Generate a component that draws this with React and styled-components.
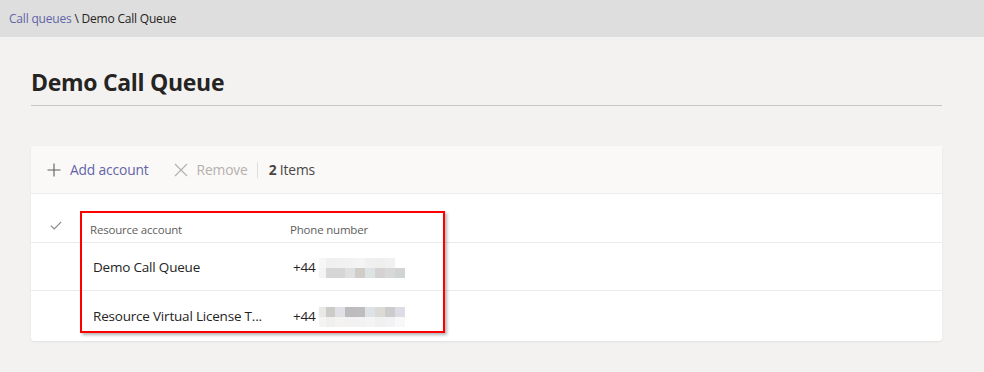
import React from "react";
import styled, { createGlobalStyle } from "styled-components";

const Global = createGlobalStyle`
  html, body { margin: 0; padding: 0; background: #f3f2f1; }
  body { font-family: "Open Sans", "Noto Sans", sans-serif; color: #252423; }
`;

const Page = styled.div`
  width: 984px;
  height: 372px;
  background: #f3f2f1;
  overflow: hidden;
`;

const TopBar = styled.div`
  height: 37px;
  background: #dedede;
  display: flex;
  align-items: center;
  padding-left: 9px;
  font-size: 12px;
  letter-spacing: -0.2px;
`;

const Crumb = styled.span`
  color: ${(p) => (p.$link ? "#6264a7" : "#252423")};
`;

const Main = styled.div`
  padding: 0 42px 0 31px;
`;

const Title = styled.h1`
  margin: 0;
  padding: 30px 0 8px;
  font-size: 23px;
  line-height: 30px;
  font-weight: 700;
  letter-spacing: -0.3px;
  color: #252423;
  border-bottom: 1px solid #c8c6c4;
`;

const Card = styled.div`
  margin-top: 40px;
  background: #fff;
  border-radius: 3px;
  box-shadow: 0 1px 2px rgba(0, 0, 0, 0.08);
  position: relative;
`;

const Toolbar = styled.div`
  height: 47px;
  background: #faf9f8;
  border-radius: 3px 3px 0 0;
  display: flex;
  align-items: center;
  padding-left: 16px;
  font-size: 13.8px;
  letter-spacing: -0.15px;
  border-bottom: 1px solid #edebe9;
`;

const ToolButton = styled.div`
  display: flex;
  align-items: center;
  gap: 9px;
  color: ${(p) => (p.$disabled ? "#b3b0ad" : "#6264a7")};
  margin-right: ${(p) => p.$mr || 0}px;
`;

const Sep = styled.span`
  width: 1px;
  height: 16px;
  background: #e1dfdd;
  margin-right: 11px;
`;

const Count = styled.span`
  color: #484644;
  b { font-weight: 700; }
`;

const Row = styled.div`
  display: grid;
  grid-template-columns: 59px 200px 1fr;
  height: ${(p) => p.$h}px;
  align-items: ${(p) => (p.$header ? "end" : "center")};
  padding-bottom: ${(p) => (p.$header ? 5 : 0)}px;
  box-sizing: border-box;
  border-bottom: ${(p) => (p.$last ? "none" : "1px solid #edebe9")};
  font-size: ${(p) => (p.$header ? "11.5px" : "13.5px")};
  color: ${(p) => (p.$header ? "#605e5c" : "#252423")};
  letter-spacing: -0.2px;
`;

const CheckCell = styled.div`
  display: flex;
  padding-left: 19px;
  padding-bottom: 7px;
`;

const Cell = styled.div`
  padding-left: ${(p) => p.$pl}px;
  display: flex;
  align-items: center;
  white-space: nowrap;
`;

const Mosaic = styled.div`
  display: grid;
  grid-template-columns: 7px 9px 10px 10px 10px 10px 10px 10px 10px;
  grid-template-rows: 10px 10px;
  margin-left: 3px;
  margin-top: 2px;
`;

const Highlight = styled.div`
  position: absolute;
  left: 49px;
  top: 65px;
  width: 365px;
  height: 122px;
  box-sizing: border-box;
  border: 2px solid #ff0000;
  box-shadow: 2px 2px 3px rgba(0, 0, 0, 0.3);
  pointer-events: none;
`;

const m1 = [
  ["#f6f6f6", "#f0f0f0", "#f1f1f1", "#f2f2f2", "#f4f4f4", "#f0f0f0", "#efefee", "#f1f1f2", "#ffffff"],
  ["#f4f4f4", "#d6d6d6", "#d6d6d6", "#e0e0e0", "#d0ccc8", "#dde2e2", "#d4d2d2", "#d8d8d8", "#d0d4d4"],
];
const m2 = [
  ["#e8e8e6", "#cccbc8", "#e0e0e6", "#bcbcbe", "#bebcbc", "#dde2e6", "#dcdad6", "#cccccc", "#dcdce6"],
  ["#f4f4f4", "#f0f0ef", "#f4f3f2", "#f2f2f2", "#f2f2f2", "#f4f4f4", "#f0f0f0", "#f2f2f4", "#f8f8f8"],
];

function Pixels({ data }) {
  return (
    <Mosaic>
      {data.flatMap((r, i) => r.map((c, j) => <span key={i + "-" + j} style={{ background: c }} />))}
    </Mosaic>
  );
}

const PlusIcon = () => (
  <svg width="14" height="14" viewBox="0 0 14 14">
    <path d="M7 0.5v13M0.5 7h13" stroke="#605e5c" strokeWidth="1.1" fill="none" />
  </svg>
);

const XIcon = () => (
  <svg width="14" height="14" viewBox="0 0 14 14">
    <path d="M1 1l12 12M13 1L1 13" stroke="#b3b0ad" strokeWidth="1.1" fill="none" />
  </svg>
);

const Check = () => (
  <svg width="12" height="9" viewBox="0 0 12 9">
    <path d="M0.8 4.6l3.4 3.3L11.2 0.8" stroke="#8a8886" strokeWidth="1.2" fill="none" />
  </svg>
);

export default function App() {
  return (
    <Page>
      <Global />
      <TopBar>
        <Crumb $link>Call queues</Crumb>
        <Crumb>&nbsp;\ Demo Call Queue</Crumb>
      </TopBar>
      <Main>
        <Title>Demo Call Queue</Title>
        <Card>
          <Toolbar>
            <ToolButton $mr={25}>
              <PlusIcon />
              <span>Add account</span>
            </ToolButton>
            <ToolButton $disabled $mr={9}>
              <XIcon />
              <span>Remove</span>
            </ToolButton>
            <Sep />
            <Count>
              <b>2</b> Items
            </Count>
          </Toolbar>
          <Row $header $h={49}>
            <CheckCell>
              <Check />
            </CheckCell>
            <Cell $pl={0}>Resource account</Cell>
            <Cell $pl={0}>Phone number</Cell>
          </Row>
          <Row $h={48}>
            <span />
            <Cell $pl={3}>Demo Call Queue</Cell>
            <Cell $pl={3}>
              +44
              <Pixels data={m1} />
            </Cell>
          </Row>
          <Row $h={50} $last>
            <span />
            <Cell $pl={3}>Resource Virtual License T...</Cell>
            <Cell $pl={3}>
              +44
              <Pixels data={m2} />
            </Cell>
          </Row>
          <Highlight />
        </Card>
      </Main>
    </Page>
  );
}
